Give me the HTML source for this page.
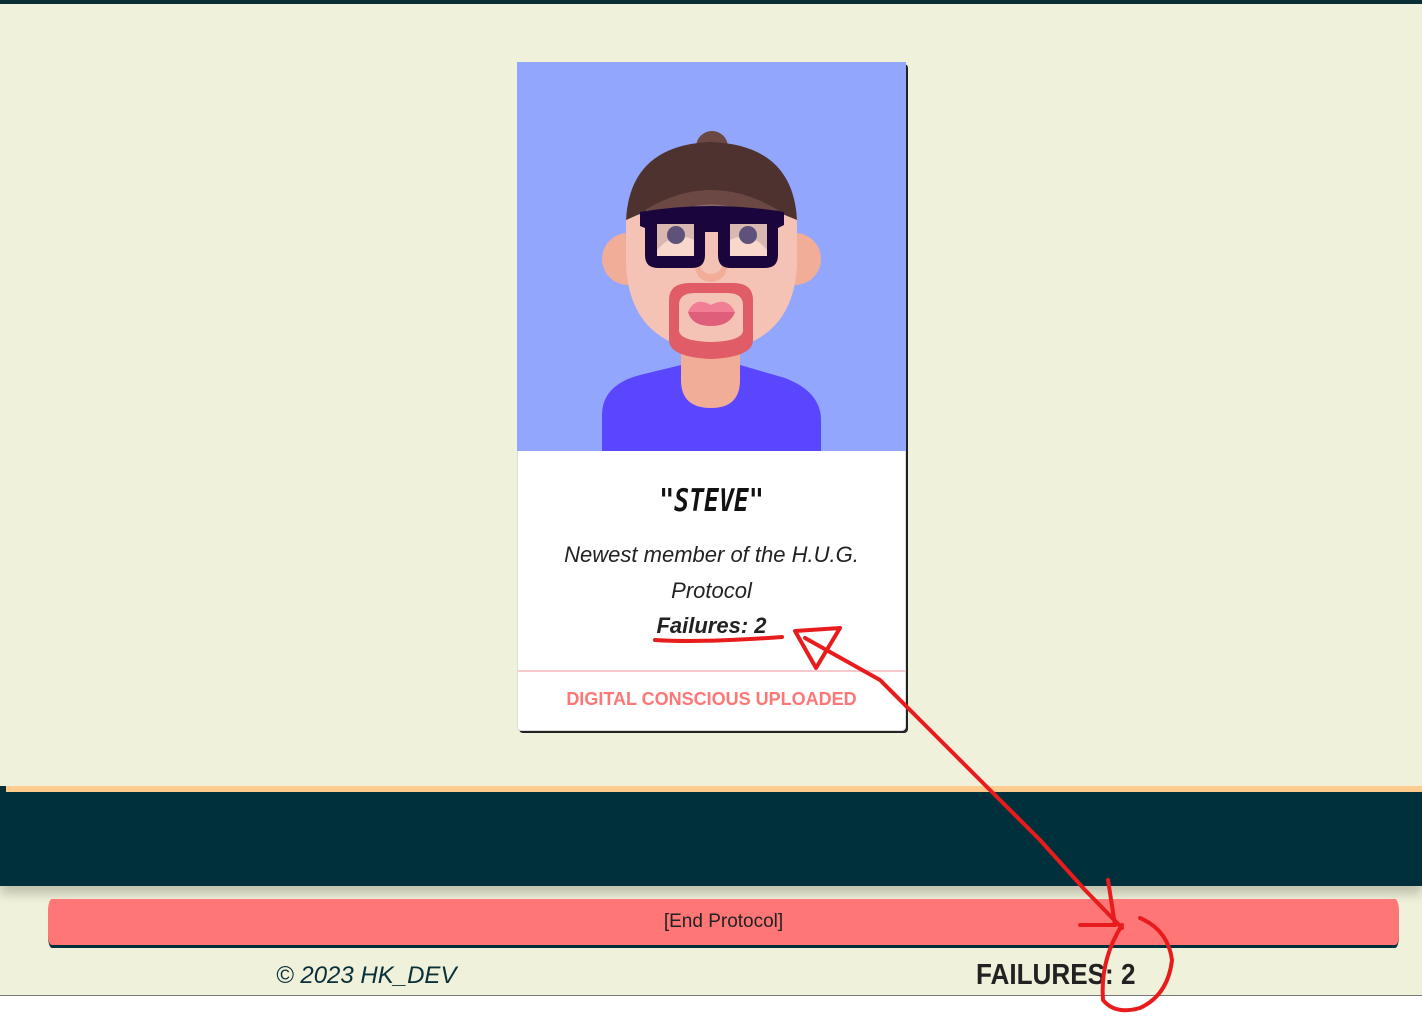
<!DOCTYPE html>
<html><head><meta charset="utf-8"><style>
*{margin:0;padding:0;box-sizing:border-box}
body{width:1422px;height:1016px;background:#fff;position:relative;overflow:hidden;font-family:"Liberation Sans",sans-serif}
.bg{position:absolute;left:0;top:0;width:1422px;height:996px;background:#f0f1da;border-bottom:1px solid #777}
.top{position:absolute;left:0;top:0;width:1422px;height:4px;background:#0a2e36}
.card{position:absolute;left:517px;top:62px;width:389px;height:669px;background:#fff;border-radius:4px;box-shadow:2px 2px 0 #222;border:1px solid #ddd}
.card h2{position:absolute;top:420px;width:100%;text-align:center;font-family:"DejaVu Sans Mono",monospace;font-style:italic;font-size:31px;letter-spacing:0px;font-weight:bold;color:#111;transform:scaleX(.8)}
.desc{position:absolute;top:474px;left:0;width:100%;text-align:center;font-style:italic;font-size:22px;line-height:36px;color:#222}
.fail{position:absolute;top:550px;width:100%;text-align:center;font-style:italic;font-weight:bold;font-size:22px;color:#222}
.hr{position:absolute;top:607px;left:0;width:100%;height:2px;background:#f7c9cc}
.up{position:absolute;top:626px;width:100%;text-align:center;font-weight:bold;font-size:18px;color:#ff7676}
.orange{position:absolute;left:0;top:786px;width:1422px;height:7px;background:#fdcc8e;border-left:6px solid #0a2e36}
.dark{position:absolute;left:0;top:792px;width:1422px;height:94px;background:#00303c;box-shadow:0 8px 10px rgba(0,0,0,.2)}
.btn{position:absolute;left:48px;top:899px;width:1351px;height:49px;background:#ff7676;border-radius:4px/12px;border-bottom:3px solid #00303c;text-align:center;line-height:46px;font-size:19px;color:#222}
.copy{position:absolute;left:276px;top:962px;font-style:italic;font-size:24px;color:#073039}
.fs{position:absolute;left:976px;top:959px;font-size:29px;color:#222;font-weight:bold;transform:scaleX(.9);transform-origin:left}
</style></head><body>
<div class="bg"></div><div class="top"></div>
<div class="card">
<svg width="389" height="389" viewBox="517 62 389 389" style="position:absolute;left:-1px;top:-1px">
<rect x="517" y="62" width="389" height="389" fill="#93a6fd"/>
<path d="M602 451 L602 415 Q602 385 640 375 L681 365 L740 365 L785 378 Q821 392 821 420 L821 451Z" fill="#5a46fe"/>
<path d="M681 340 L740 340 L740 380 Q740 408 711 408 Q681 408 681 380Z" fill="#f1ad98"/>
<circle cx="628" cy="259" r="26" fill="#f1ad98"/><circle cx="795" cy="259" r="26" fill="#f1ad98"/>
<path d="M626 215 L626 265 Q630 345 711 352 Q793 345 797 265 L797 215Z" fill="#f4c3b6"/>
<circle cx="712" cy="147" r="16" fill="#6b4843"/>
<path d="M626 220 Q630 145 711 142 Q793 145 797 220 L760 205 L660 205Z" fill="#4e3230"/>
<path d="M645 210 Q711 170 778 210 L760 214 L660 214Z" fill="#6b4843"/>
<path d="M670 214 Q711 195 752 214Z" fill="#8a6a66"/>
<circle cx="711" cy="266" r="16" fill="#f1ad98"/><circle cx="711" cy="262" r="12" fill="#f4c3b6"/>
<path d="M640 212 Q711 200 784 212 L784 225 L778 228 L778 255 Q778 268 765 268 L730 268 Q718 268 718 255 L718 232 L705 232 L705 255 Q705 268 692 268 L658 268 Q645 268 645 255 L645 228 L640 226Z" fill="#1a063d"/>
<rect x="657" y="224" width="37" height="32" fill="#f8d8cc"/><rect x="730" y="224" width="37" height="32" fill="#f8d8cc"/>
<path d="M657 224 L694 224 L694 240 Q675 230 657 250Z" fill="#d8b8b0"/><path d="M730 224 L767 224 L767 250 Q750 230 730 240Z" fill="#d8b8b0"/>
<circle cx="676" cy="235" r="9" fill="#5e527b"/><circle cx="748" cy="235" r="9" fill="#5e527b"/>
<path d="M669 300 Q669 283 690 283 L733 283 Q753 283 753 300 L753 340 Q753 357 711 359 Q669 357 669 340Z" fill="#e05c66"/>
<path d="M679 305 Q679 293 695 293 L727 293 Q743 293 743 305 L743 330 Q743 341 711 342 Q679 341 679 330Z" fill="#f4c3b6"/>
<path d="M688 312 Q695 296 711 305 Q727 296 735 312 Q730 326 711 326 Q692 326 688 312Z" fill="#f27e96"/>
<path d="M688 312 L735 312 Q730 326 711 326 Q692 326 688 312Z" fill="#df5f7b"/>
</svg>
<h2>"STEVE"</h2>
<div class="desc">Newest member of the H.U.G.<br>Protocol</div>
<div class="fail">Failures: 2</div>
<div class="hr"></div>
<div class="up">DIGITAL CONSCIOUS UPLOADED</div>
</div>
<div class="orange"></div><div class="dark"></div>
<div class="btn">[End Protocol]</div>
<div class="copy">© 2023 HK_DEV</div>
<div class="fs">FAILURES: 2</div>
<svg width="1422" height="1016" style="position:absolute;left:0;top:0" fill="none" stroke="#e81c1c" stroke-width="4" stroke-linejoin="round" stroke-linecap="round">
<path d="M655 640 Q700 643 782 637"/>
<path d="M795 631 L840 628 L816 668 Z"/>
<path d="M805 638 L880 680 L930 730 L990 790 L1040 840 L1085 890 L1122 928"/>
<path d="M1108 880 L1115 925 L1080 925"/>
<path d="M1122 925 Q1100 960 1103 1000 Q1115 1015 1140 1008 Q1168 995 1172 960 Q1168 930 1140 918"/>
</svg>
</body></html>
